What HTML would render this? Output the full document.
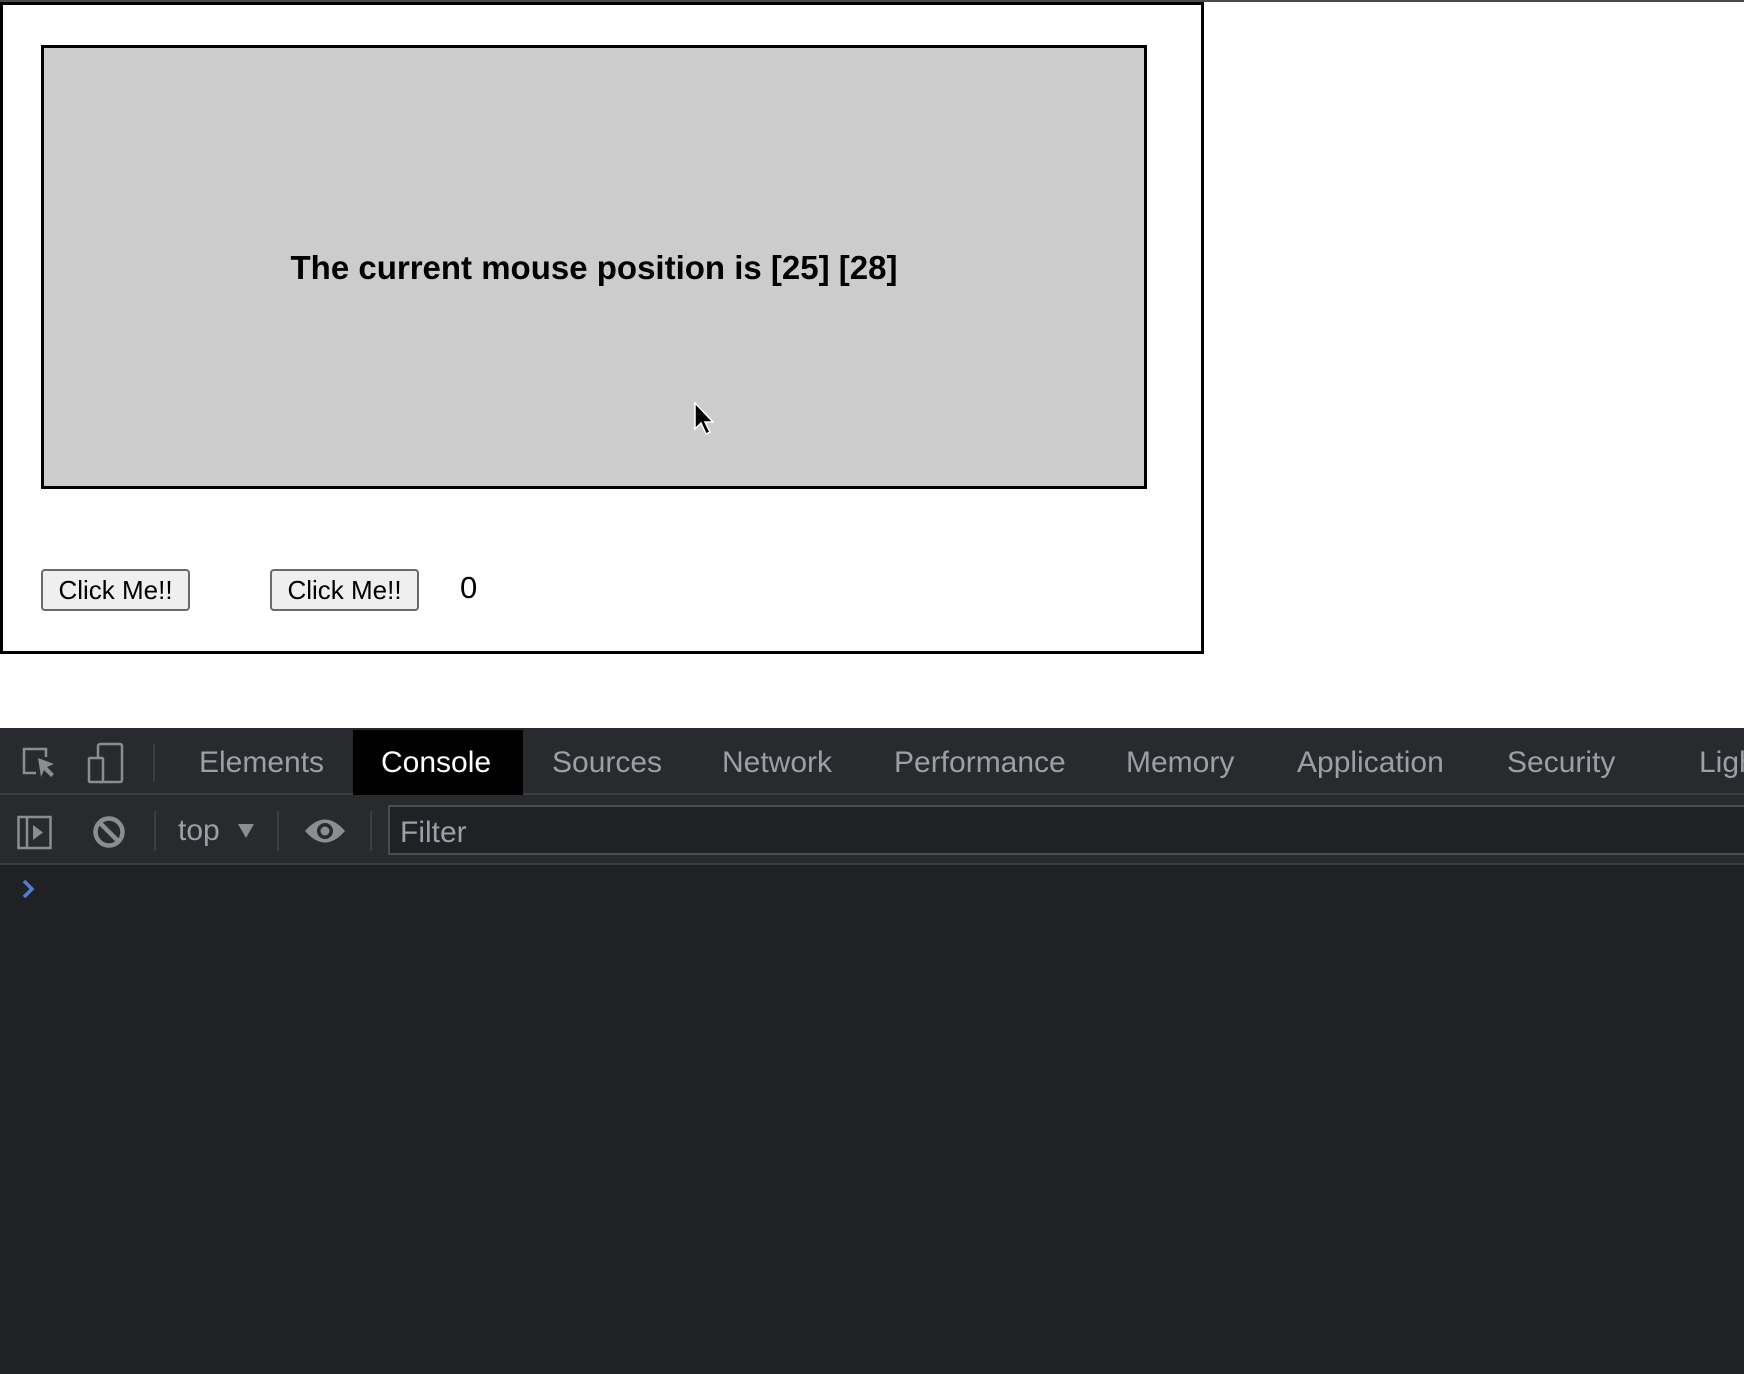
<!DOCTYPE html>
<html><head><meta charset="utf-8"><style>
*{margin:0;padding:0;box-sizing:border-box}
body{width:1744px;height:1374px;background:#fff;position:relative;overflow:hidden;font-family:"Liberation Sans",Arial,sans-serif}
.abs{position:absolute}
.topline{left:0;top:0;width:1744px;height:2px;background:#4a4a4a}
.outer{left:0;top:2px;width:1204px;height:652px;border:3px solid #000}
.gray{left:41px;top:45px;width:1106px;height:444px;border:3px solid #000;background:#ccc}
.msg{left:41px;width:1106px;top:249px;text-align:center;font-weight:bold;font-size:33px;color:#000}
.btn{top:569px;height:42px;border:2px solid #6a6a6a;border-radius:4px;background:#efefef;font-size:26px;color:#000;text-align:center;line-height:38px}
.dt{left:0;top:728px;width:1744px;height:646px;background:#202124}
.tabs{left:0;top:728px;width:1744px;height:67px;background:#292a2d;border-bottom:2px solid #3d3e42}
.tab{top:730px;height:66px;line-height:66px;font-size:30px;color:#9aa0a6}
.bar2{left:0;top:795px;width:1744px;height:70px;background:#292a2d;border-bottom:2px solid #3d3e42}
.sep{width:2px;background:#3d3e42}
</style></head><body>
<div class="abs topline"></div>
<div class="abs outer"></div>
<div class="abs gray"></div>
<div class="abs msg">The current mouse position is [25] [28]</div>
<svg class="abs" style="left:694px;top:402px" width="24" height="36" viewBox="0 0 24 36"><path d="M1 1 L1 27 L7 21 L12 32 L16 30 L11 20 L19 20 Z" fill="#000" stroke="#fff" stroke-width="1.5"/></svg>
<div class="abs btn" style="left:41px;width:149px">Click Me!!</div>
<div class="abs btn" style="left:270px;width:149px">Click Me!!</div>
<div class="abs" style="left:460px;top:570px;font-size:31px">0</div>

<div class="abs dt"></div>
<div class="abs tabs"></div>
<div class="abs" style="left:353px;top:730px;width:170px;height:65px;background:#000"></div>
<svg class="abs" style="left:20px;top:745px" width="40" height="36" viewBox="0 0 40 36"><path d="M16 28 H4 V4 H26 V12" fill="none" stroke="#8a8d91" stroke-width="2.5"/><path d="M18 13 L34 19 L27 22 L34 29 L31 32 L24 25 L21 32 Z" fill="#8a8d91"/></svg>
<svg class="abs" style="left:86px;top:742px" width="40" height="42" viewBox="0 0 40 42"><rect x="12" y="2" width="24" height="38" rx="2" fill="none" stroke="#8a8d91" stroke-width="2.5"/><rect x="3" y="16" width="14" height="24" rx="1" fill="#292a2d" stroke="#8a8d91" stroke-width="2.5"/></svg>
<div class="abs sep" style="left:153px;top:744px;height:38px"></div>
<div class="abs tab" style="left:199px">Elements</div>
<div class="abs tab" style="left:381px;color:#fff">Console</div>
<div class="abs tab" style="left:552px">Sources</div>
<div class="abs tab" style="left:722px">Network</div>
<div class="abs tab" style="left:894px">Performance</div>
<div class="abs tab" style="left:1126px">Memory</div>
<div class="abs tab" style="left:1297px">Application</div>
<div class="abs tab" style="left:1507px">Security</div>
<div class="abs tab" style="left:1699px">Ligh</div>

<div class="abs bar2"></div>
<svg class="abs" style="left:17px;top:815px" width="36" height="36" viewBox="0 0 36 36"><rect x="1.5" y="2" width="32" height="31" fill="none" stroke="#8a8d91" stroke-width="2.5"/><line x1="10" y1="2" x2="10" y2="33" stroke="#8a8d91" stroke-width="2.5"/><path d="M16 10 L26 17.5 L16 25 Z" fill="#8a8d91"/></svg>
<svg class="abs" style="left:92px;top:815px" width="34" height="34" viewBox="0 0 34 34"><circle cx="17" cy="17" r="13.5" fill="none" stroke="#8a8d91" stroke-width="4.5"/><line x1="8" y1="8" x2="26" y2="26" stroke="#8a8d91" stroke-width="4.5"/></svg>
<div class="abs sep" style="left:154px;top:811px;height:40px"></div>
<div class="abs" style="left:178px;top:814px;font-size:30px;color:#9aa0a6">top</div>
<svg class="abs" style="left:237px;top:823px" width="18" height="16" viewBox="0 0 18 16"><path d="M1 1 H17 L9 15 Z" fill="#8a8d91"/></svg>
<div class="abs sep" style="left:277px;top:811px;height:40px"></div>
<svg class="abs" style="left:304px;top:816px" width="42" height="30" viewBox="0 0 42 30"><path d="M1 15 Q21 -8 41 15 Q21 38 1 15 Z" fill="#8a8d91"/><circle cx="21" cy="15" r="8" fill="#292a2d"/><circle cx="21" cy="15" r="4.5" fill="#8a8d91"/></svg>
<div class="abs sep" style="left:370px;top:811px;height:40px"></div>
<div class="abs" style="left:388px;top:805px;width:1380px;height:50px;border:2px solid #4a4c50;background:#202124"></div>
<div class="abs" style="left:400px;top:816px;font-size:30px;color:#9aa0a6">Filter</div>
<svg class="abs" style="left:21px;top:879px" width="16" height="20" viewBox="0 0 16 20"><path d="M3 2 L11 10 L3 18" fill="none" stroke="#4d7fd8" stroke-width="3.5"/></svg>
</body></html>
